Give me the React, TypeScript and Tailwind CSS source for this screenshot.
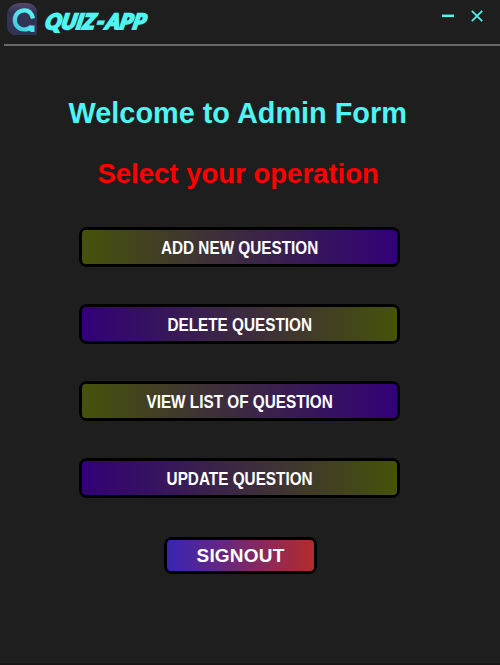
import React from "react";

const olive = "bg-linear-to-r/srgb from-[#46520a] to-[#320078]";
const violet = "bg-linear-to-r/srgb from-[#320078] to-[#46520a]";

const operations = [
  { label: "ADD NEW QUESTION", fill: olive },
  { label: "DELETE QUESTION", fill: violet },
  { label: "VIEW LIST OF QUESTION", fill: olive },
  { label: "UPDATE QUESTION", fill: violet },
];

function Logo() {
  return (
    <svg className="h-8 w-[30px]" viewBox="0 0 30 32">
      <defs>
        <linearGradient id="tile" x1="0" y1="0" x2="0" y2="1">
          <stop offset="0" stopColor="#58476b" />
          <stop offset=".3" stopColor="#343457" />
          <stop offset="1" stopColor="#303352" />
        </linearGradient>
        <linearGradient id="ring" x1="0" y1="1" x2="1" y2="0">
          <stop offset="0" stopColor="#43c6e0" />
          <stop offset=".5" stopColor="#50e4ee" />
          <stop offset="1" stopColor="#5af4f0" />
        </linearGradient>
      </defs>
      <path d="M0 13C0 5 6 0 13 0h6c6 0 9 3 11 7v25H6c-4-2-6-5-6-9z" fill="url(#tile)" />
      <path d="M26 15.500C25 10.500 22 7.300 17.500 7.300C11.500 7.300 7.800 11.800 7.800 17C7.800 22.500 12 26.500 17 26.500C20 26.500 22.500 25.800 24.500 23.500" fill="none" stroke="url(#ring)" strokeWidth="4.200" />
      <path d="M22.500 22.500h5v6.500h-3.500l-3-2.500z" fill="#4fe4ef" />
    </svg>
  );
}

export default function App() {
  return (
    <main className="flex h-[665px] w-[500px] flex-col overflow-hidden border-b-2 border-[#191416] bg-[#1e1e1e] font-['Liberation_Sans',Arial,sans-serif]">
      <header className="ml-1 flex h-[46px] shrink-0 items-start border-b-2 border-[#696969] pl-[3px] pt-[3px] text-[#4ff5f0]">
        <Logo />
        <div className="ml-[9px] mt-[6px] h-6 w-[104px] origin-left -skew-x-[12deg] whitespace-nowrap font-['Lato',sans-serif] text-[21px] font-black italic leading-6 tracking-[0.400px] [-webkit-text-stroke:2px_#4ff5f0]">
          QUIZ<span className="mx-[1.500px]">-</span>APP
        </div>
        <div className="ml-auto mr-[17px] mt-[7px] flex gap-[17px]">
          <svg className="h-3 w-3" viewBox="0 0 12 12" stroke="currentColor" strokeWidth="2.500"><path d="M0 5.800h12" /></svg>
          <svg className="h-3 w-3" viewBox="0 0 12 12" stroke="currentColor" strokeWidth="1.700"><path d="M.8.8l10.400 10.400M11.200.8L.8 11.200" /></svg>
        </div>
      </header>
      <section className="flex flex-col items-center pr-[21px]">
        <h1 className="mr-[3px] mt-[50px] h-[34px] scale-x-[0.985] whitespace-nowrap text-[29.300px] font-bold leading-[34px] text-[#4ff5f0]">Welcome to Admin Form</h1>
        <h2 className="mr-[3px] mt-[28px] h-8 scale-x-[0.983] whitespace-nowrap text-[28px] font-bold leading-8 text-[#ff0000]">Select your operation</h2>
        <nav className="mt-[37px] flex flex-col gap-[37px]">
          {operations.map(({ label, fill }) => (
            <button key={label} className="flex h-10 w-[321px] rounded-[8px] bg-black p-[3px]">
              <span className={`flex h-full w-full items-center justify-center rounded-[4px] pt-px ${fill}`}>
                <span className="scale-x-[0.806] whitespace-nowrap text-[19px] font-bold leading-6 text-white">{label}</span>
              </span>
            </button>
          ))}
        </nav>
        <button className="ml-[2px] mt-[39px] flex h-[37px] w-[153px] rounded-[8px] bg-black p-[3px]">
          <span className="flex h-full w-full items-center justify-center rounded-[4px] bg-linear-to-r/srgb from-[#3824b4] to-[#b42b2c] pt-px text-[19px] font-bold tracking-[0.200px] text-white">SIGNOUT</span>
        </button>
      </section>
    </main>
  );
}
